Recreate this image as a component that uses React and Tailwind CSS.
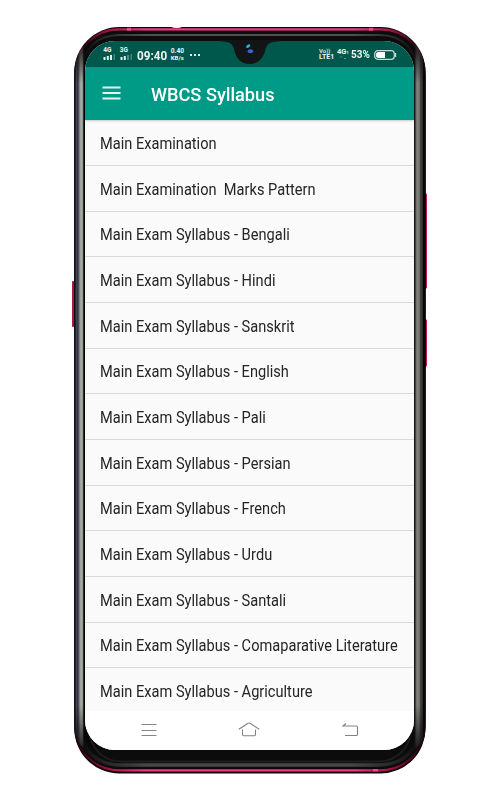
const topics = [
  'Main Examination',
  'Main Examination  Marks Pattern',
  'Main Exam Syllabus - Bengali',
  'Main Exam Syllabus - Hindi',
  'Main Exam Syllabus - Sanskrit',
  'Main Exam Syllabus - English',
  'Main Exam Syllabus - Pali',
  'Main Exam Syllabus - Persian',
  'Main Exam Syllabus - French',
  'Main Exam Syllabus - Urdu',
  'Main Exam Syllabus - Santali',
  'Main Exam Syllabus - Comaparative Literature',
  'Main Exam Syllabus - Agriculture',
];

function PhoneBody() {
  return (
    <svg className="absolute inset-0" width="498" height="800" viewBox="0 0 498 800" aria-hidden="true">
      <defs>
        <linearGradient id="rim" x1="74" x2="426" y1="0" y2="0" gradientUnits="userSpaceOnUse">
          <stop offset="0" stopColor="#14030a" />
          <stop offset=".03" stopColor="#3a0615" />
          <stop offset=".1" stopColor="#a01442" />
          <stop offset=".2" stopColor="#f03a85" />
          <stop offset=".8" stopColor="#f03a85" />
          <stop offset=".9" stopColor="#a01442" />
          <stop offset=".97" stopColor="#3a0615" />
          <stop offset="1" stopColor="#14030a" />
        </linearGradient>
        <linearGradient id="left" x1="74" x2="85.5" y1="0" y2="0" gradientUnits="userSpaceOnUse">
          <stop offset="0" stopColor="#050507" />
          <stop offset=".1" stopColor="#15151c" />
          <stop offset=".2" stopColor="#45445a" />
          <stop offset=".32" stopColor="#34343f" />
          <stop offset=".42" stopColor="#55585a" />
          <stop offset=".52" stopColor="#9da19c" />
          <stop offset=".7" stopColor="#a9ada7" />
          <stop offset=".8" stopColor="#747874" />
          <stop offset=".84" stopColor="#050505" />
          <stop offset="1" stopColor="#000" />
        </linearGradient>
        <linearGradient id="right" x1="414" x2="425.5" y1="0" y2="0" gradientUnits="userSpaceOnUse">
          <stop offset="0" stopColor="#060808" />
          <stop offset=".1" stopColor="#222" />
          <stop offset=".16" stopColor="#666864" />
          <stop offset=".34" stopColor="#858681" />
          <stop offset=".5" stopColor="#656661" />
          <stop offset=".56" stopColor="#414746" />
          <stop offset=".72" stopColor="#303635" />
          <stop offset=".82" stopColor="#080808" />
          <stop offset="1" stopColor="#12000a" />
        </linearGradient>
        <linearGradient id="sideFade" x1="0" x2="0" y1="40" y2="755" gradientUnits="userSpaceOnUse">
          <stop offset="0" stopColor="#000" />
          <stop offset=".06" stopColor="#fff" />
          <stop offset=".93" stopColor="#fff" />
          <stop offset="1" stopColor="#000" />
        </linearGradient>
        <linearGradient id="shine" x1="80" x2="420" y1="0" y2="0" gradientUnits="userSpaceOnUse">
          <stop offset="0" stopColor="#777" stopOpacity="0" />
          <stop offset=".2" stopColor="#666" />
          <stop offset=".8" stopColor="#666" />
          <stop offset="1" stopColor="#777" stopOpacity="0" />
        </linearGradient>
        <mask id="fade"><rect width="498" height="800" fill="url(#sideFade)" /></mask>
      </defs>
      <rect x="72" y="281" width="3" height="46" rx="1" fill="#a51a45" />
      <rect x="424" y="193.500" width="3" height="95" rx="1" fill="#c01850" />
      <rect x="424" y="319.500" width="3" height="47" rx="1" fill="#c01850" />
      <rect x="74.300" y="27" width="351.200" height="746.500" rx="45" fill="#12050a" />
      <rect x="75.300" y="29.300" width="349.200" height="741" rx="44" fill="none" stroke="url(#rim)" strokeWidth="2.200" />
      <rect x="75.300" y="31" width="349.200" height="737.500" rx="43" fill="#0c0c0d" />
      <g mask="url(#fade)">
        <path d="M74.300 76C75 59 80 45 93 36L97 42C88 49 85.500 57 85.500 68V720C85.500 733 91 741 99 746L94 757C81 748 74.300 740 74.300 724Z" fill="url(#left)" />
        <path d="M425.500 76C425 59 420 45 407 36L403 42C412 49 414 57 414 68V720C414 733 409 741 401 746L406 757C419 748 425.500 740 425.500 724Z" fill="url(#right)" />
      </g>
      <path d="M82 72C83 49 96 35 120 35H379C403 35 416 49 417 72" fill="none" stroke="url(#shine)" strokeWidth="2" opacity=".75" />
      <path d="M79 719C80 749 94 765 122 765H377C405 765 420 749 420 719" fill="none" stroke="url(#shine)" strokeWidth="3.500" opacity=".65" />
      <path d="M90 738C96 754 106 761.500 122 761.500H377C393 761.500 404 754 410 738" fill="none" stroke="#1c1d1d" strokeWidth="2" />
      <path d="M127 27.800h4v3h-4ZM369 27.800h4v3h-4ZM373 769h5v2.500h-5Z" fill="#ff5b9f" opacity=".7" />
      <path d="M170 26.500h13q-6 3-13 0Z" fill="#fff" />
    </svg>
  );
}

function Notch() {
  return (
    <svg className="absolute left-[220px] top-[40px]" width="60" height="26" viewBox="220 40 60 26" aria-hidden="true">
      <path d="M220 40H280V41.300C271 41.500 267 43 265.500 49C264 58 258 64 249.500 64C241 64 235.500 58 234 49C232.500 43 229 41.500 220 41.300Z" fill="#131416" />
      <ellipse cx="248.200" cy="46.200" rx="2.300" ry="1.400" fill="#2cadd8" transform="rotate(-35 248.200 46.200)" />
      <ellipse cx="250.400" cy="51.300" rx="2.700" ry="2" fill="#3567d0" />
    </svg>
  );
}

function Signal({ label, strong }) {
  return (
    <div className="mb-[3px] w-[16.500px]">
      <div className="h-[7px] text-[6.500px] font-bold leading-[7px]">{label}</div>
      <svg width="14" height="6" viewBox="0 0 14 6" className="block">
        <path d="M.5 3h2v3h-2ZM3.800 2h2v4h-2Z" fill="#e5f2ef" />
        <path d="M7 1h2v5H7Z" fill="#e5f2ef" opacity={strong ? 1 : 0.35} />
        <path d="M10.500 0h1.500v6h-1.500Z" fill="#e5f2ef" opacity=".3" />
      </svg>
    </div>
  );
}

function StatusBar() {
  return (
    <div className="flex h-[26px] shrink-0 items-center bg-[#00574b] pl-[18px] pr-[17px] pt-[2px] text-[#edf6f4]">
      <Signal label="4G" strong />
      <Signal label="3G" />
      <span className="ml-px w-[33.500px] origin-left scale-x-[0.9] whitespace-nowrap text-[13px] font-bold leading-none">09:40</span>
      <div className="mb-[1px] w-[18px] text-[6.600px] font-bold leading-[7px]">
        <div className="h-[6.500px]">0.40</div>
        <div className="h-[7px] text-[6px]">KB/s</div>
      </div>
      <svg width="12" height="4" viewBox="0 0 12 4">
        <path d="M1 1h2v2H1ZM5 1h2v2H5ZM9 1h2v2H9Z" fill="#dcebe8" />
      </svg>
      <div className="mb-[1px] ml-auto w-[18px] text-[7px] font-bold leading-[7px]">
        <div className="h-[6px] text-[6px] font-medium leading-[6px]">Vo))</div>
        <div>LTE1</div>
      </div>
      <div className="mb-[2px] w-[14px]">
        <div className="text-[7.500px] font-bold leading-[7px]">4G<span className="text-[4px]">1</span></div>
        <svg width="8" height="4" viewBox="0 0 8 4" className="ml-[2px] block">
          <path d="M1 1.500 2 .5 3 1.500M5 2l1 1 1-1" fill="none" stroke="#70a69c" strokeWidth=".8" />
        </svg>
      </div>
      <span className="w-[23px] origin-left scale-x-[0.95] whitespace-nowrap pt-px text-[10.500px] font-bold leading-none">53%</span>
      <svg width="23" height="10" viewBox="0 0 23 10" className="shrink-0">
        <rect x=".7" y=".7" width="19.600" height="8.600" rx="3" fill="none" stroke="#c8ddd0" strokeWidth="1.200" />
        <path d="M4 2h7v6H4Q2 8 2 5T4 2Z" fill="#fff" />
        <path d="M21 3h1.200v4H21Z" fill="#c8ddd0" />
      </svg>
    </div>
  );
}

export default function App() {
  return (
    <main className="relative h-[800px] w-[498px] overflow-hidden bg-white pl-[85.300px] pt-[41px] font-['Roboto',sans-serif]">
      <PhoneBody />
      <section className="relative flex h-[709px] w-[328.700px] flex-col overflow-hidden rounded-[30px] bg-white">
        <StatusBar />
        <header className="relative z-10 flex h-[52.500px] shrink-0 items-center bg-[#009b87] pl-[16.500px] text-white shadow-[0_1px_2px_rgba(0,0,0,0.2)]">
          <svg width="19" height="14" viewBox="0 0 19 14" className="mr-[30.500px]">
            <path d="M.5 1.500h18M.5 7h18M.5 12.500h18" stroke="#e2f4f0" strokeWidth="2" />
          </svg>
          <h1 className="origin-left scale-x-[0.957] whitespace-nowrap pt-[3px] text-[19px] font-medium leading-none">WBCS Syllabus</h1>
        </header>
        <ul className="min-h-0 flex-1 overflow-hidden bg-[#fafafa] pt-[0.800px]">
          {topics.map((topic) => (
            <li key={topic} className="flex h-[45.680px] items-center whitespace-pre border-b border-[#dadada] pl-[14.700px] pt-[4.500px] text-[15.600px] leading-none text-[#242424]">
              <span className="origin-left scale-x-[0.937]">{topic}</span>
            </li>
          ))}
        </ul>
        <nav className="flex h-[39px] shrink-0 items-center justify-between bg-white pb-[2px] pl-[56px] pr-[55.300px]">
          <svg width="16" height="14" viewBox="0 0 16 14">
            <path d="M.5 1.500h15M.5 7.500h15M.5 12.500h15" stroke="#858585" />
          </svg>
          <svg width="22" height="15" viewBox="0 0 22 15" fill="none" stroke="#838383" strokeWidth="1.100">
            <path d="M.8 7.300 10 1.300q1-.6 2 0l9.200 6M4.500 7.500v5q0 1.200 1.200 1.200h10.600q1.200 0 1.200-1.200v-5" />
          </svg>
          <svg width="17" height="14" viewBox="0 0 17 14" fill="none" stroke="#838383" strokeWidth="1.100">
            <path d="M4 .5 1 3h13.500q1 0 1 1v7.500q0 1-1 1H3" />
          </svg>
        </nav>
      </section>
      <Notch />
    </main>
  );
}
